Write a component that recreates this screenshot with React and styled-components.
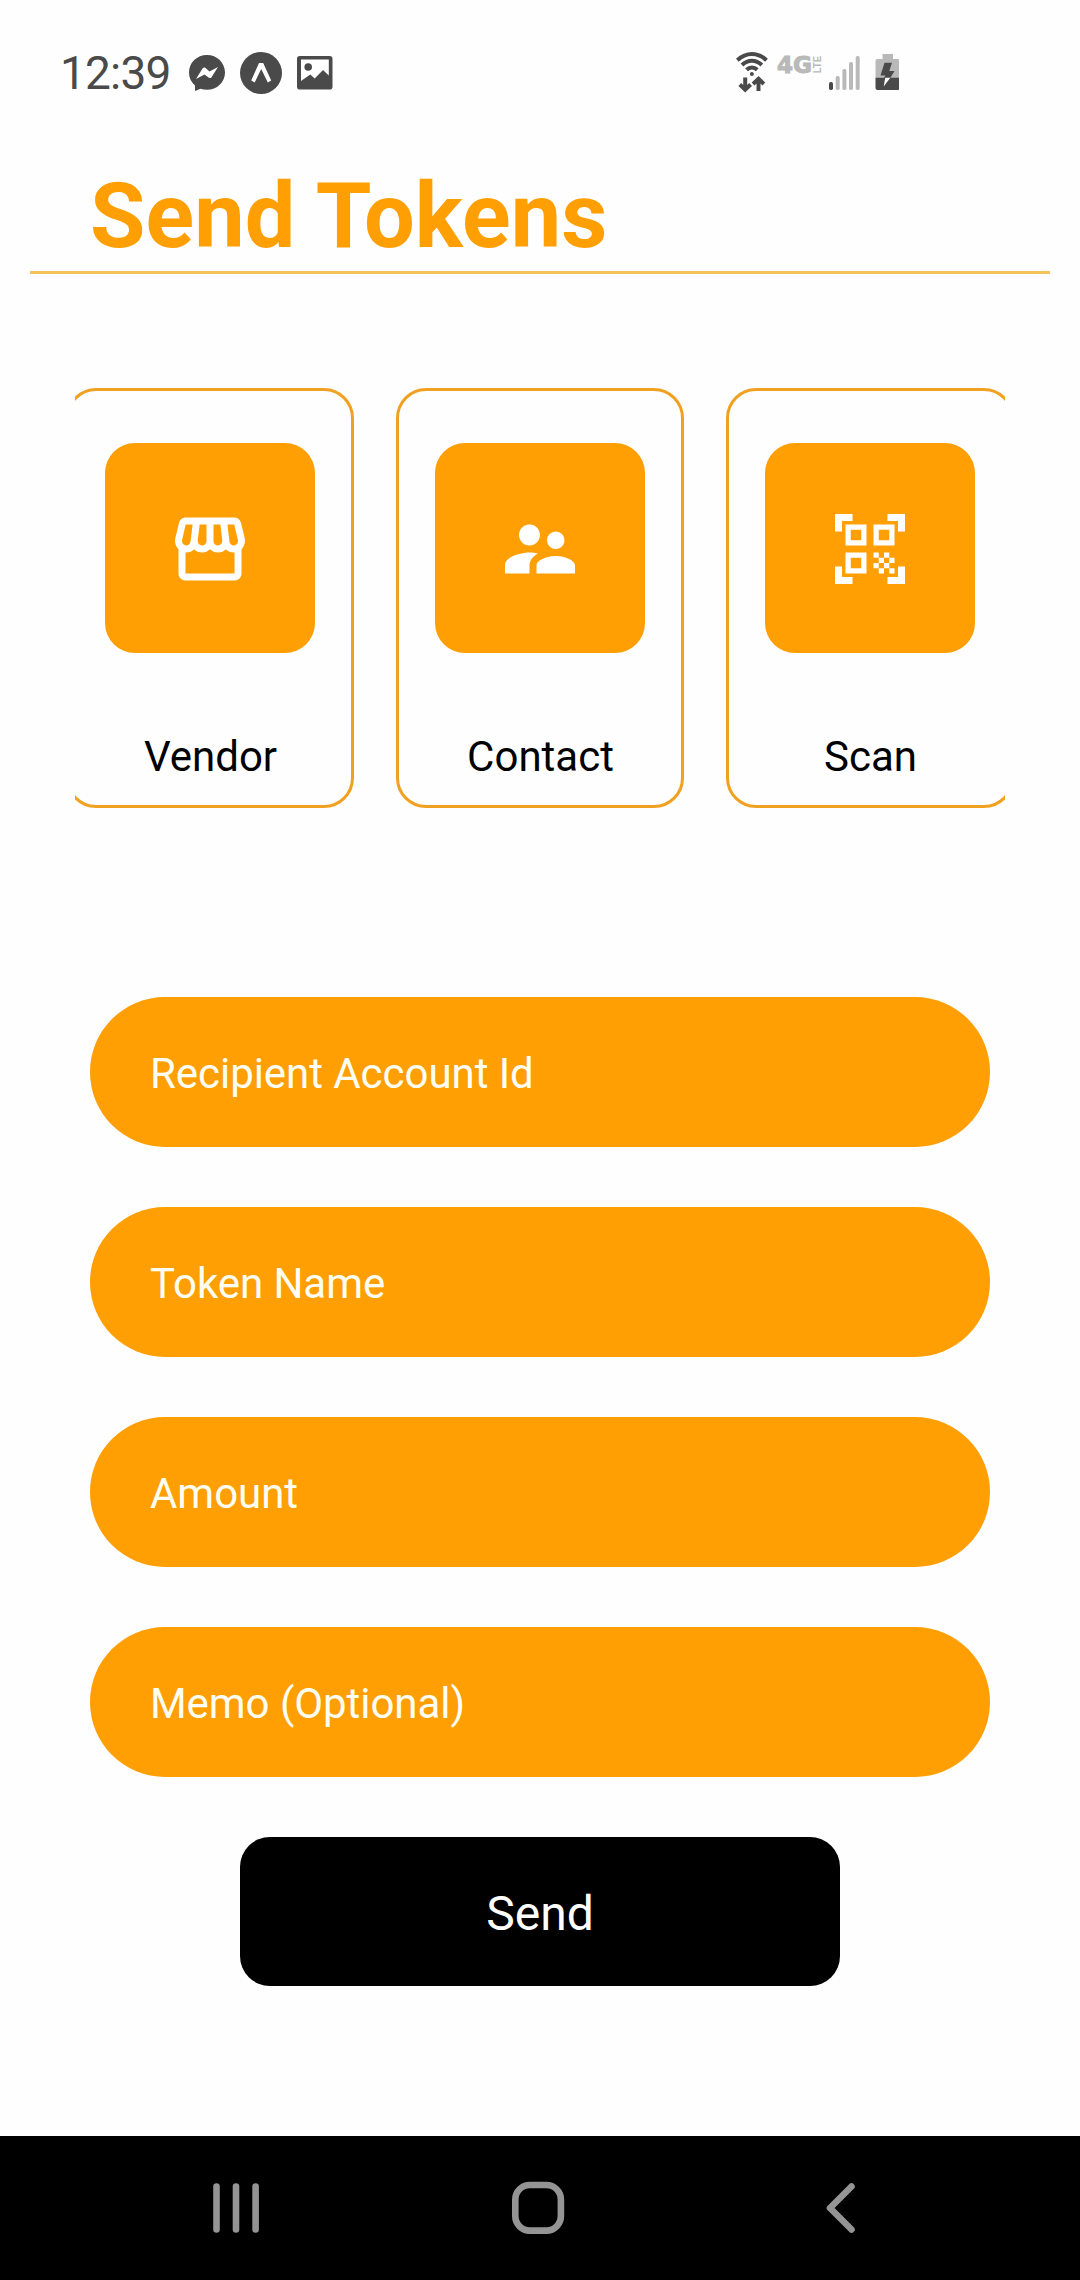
import styled, { createGlobalStyle } from 'styled-components';
import { MdOutlineStorefront, MdSupervisorAccount, MdOutlineQrCodeScanner } from 'react-icons/md';

const orange = '#ff9f04';
const statusDark = '#4a4a4a';
const statusLight = '#b9b9b9';

const GlobalStyle = createGlobalStyle`
    *{
        box-sizing:border-box;
        margin:0;
        padding:0;
    }
    body{
        background:#fefefe;
        font-family:Roboto, "Liberation Sans", sans-serif;
    }
`;

const Screen = styled.div`
    width:1080px;
    height:2280px;
    display:flex;
    flex-direction:column;
    overflow:hidden;
    background:#fefefe;
`;

const StatusBar = styled.header`
    height:146px;
    padding:0 181px 0 60px;
    display:flex;
    align-items:center;
    justify-content:space-between;
`;

const StatusGroup = styled.div`
    display:flex;
    align-items:center;
    gap:${props => props.gap};
`;

const Clock = styled.span`
    width:114px;
    color:${statusDark};
    font-size:46px;
    line-height:54px;
    letter-spacing:-0.8px;
    white-space:nowrap;
`;

const StatusIcon = styled.svg`
    display:block;
    flex:none;
`;

const Header = styled.div`
    margin:0 30px;
    height:128px;
    padding:18px 60px 0;
    border-bottom:3px solid #f5c35c;
`;

const Title = styled.h1`
    color:${orange};
    font-size:90px;
    line-height:106px;
    font-weight:700;
    letter-spacing:0.1px;
    white-space:nowrap;
`;

const CardList = styled.div`
    margin:114px 75px 0;
    display:flex;
    justify-content:center;
    gap:42px;
    overflow:hidden;
`;

const Card = styled.div`
    flex:none;
    width:288px;
    height:420px;
    padding-top:52px;
    display:flex;
    flex-direction:column;
    align-items:center;
    gap:79px;
    border:3px solid #f1a122;
    border-radius:30px;
`;

const Tile = styled.div`
    flex:none;
    width:210px;
    height:210px;
    padding-top:1px;
    display:flex;
    align-items:center;
    justify-content:center;
    border-radius:30px;
    background:${orange};
    color:white;
    font-size:84px;
`;

const CardLabel = styled.p`
    padding-left:1px;
    color:black;
    font-size:42px;
    line-height:49px;
`;

const Form = styled.form`
    margin-top:189px;
    padding:0 90px;
    display:flex;
    flex-direction:column;
    align-items:center;
    gap:60px;
`;

const Field = styled.label`
    width:100%;
    height:150px;
    padding:2px 60px 0;
    display:flex;
    align-items:center;
    border-radius:75px;
    background:${orange};
    color:#fffef2;
    font-size:42px;
    line-height:49px;
    letter-spacing:-0.05px;
`;

const SendButton = styled.button`
    width:600px;
    height:149px;
    padding-top:5px;
    border:none;
    border-radius:30px;
    background:black;
    color:white;
    font-family:inherit;
    font-size:48px;
    line-height:56px;
`;

const NavBar = styled.nav`
    height:144px;
    margin-top:auto;
    padding-left:210px;
    display:flex;
    align-items:center;
    gap:248px;
    background:black;
`;

const NavIcon = styled.svg`
    display:block;
    fill:none;
    stroke:#949494;
    stroke-width:6.6;
    stroke-linecap:round;
    stroke-linejoin:round;
`;

const cards = [
    { label: 'Vendor', Icon: MdOutlineStorefront },
    { label: 'Contact', Icon: MdSupervisorAccount },
    { label: 'Scan', Icon: MdOutlineQrCodeScanner },
];

const fields = ['Recipient Account Id', 'Token Name', 'Amount', 'Memo (Optional)'];

const bars = [
    { x: 0, y: 26 },
    { x: 6.7, y: 20 },
    { x: 13.4, y: 13 },
    { x: 20, y: 6 },
    { x: 26.7, y: 0 },
];

const MessengerIcon = () => (
    <StatusIcon width="36" height="36" viewBox="0 0 36 36">
        <path fill={statusDark} d="M18 0C8 0 0 7.600 0 17.500c0 5.200 2.200 9.700 6 12.900V36l5.500-2.300c2 .7 4.200 1.100 6.500 1.100 10 0 18-7.600 18-17.300S28 0 18 0z" />
        <path fill="white" d="M7 24l6.500-10.500c.8-1 2-1.200 3-.5l4 3.500L29 12l-6.500 10.200c-.8 1-2 1.200-3 .4l-4-3.200z" />
    </StatusIcon>
);

const ExpoIcon = () => (
    <StatusIcon width="42" height="42" viewBox="0 0 42 42">
        <circle cx="21" cy="21" r="21" fill={statusDark} />
        <path fill="white" d="M19 11h4.200l8 17.500-3.400 2-6.600-13.500-6.500 13.500-3.500-2z" />
    </StatusIcon>
);

const PictureIcon = () => (
    <StatusIcon width="36" height="34" viewBox="0 0 36 34">
        <rect width="35.500" height="33.500" rx="2.800" fill={statusDark} />
        <path fill="white" d="M4 3.500h27.800v16L26 14l-8.300 8.500-4.400-4L4 25z" />
        <circle cx="11.200" cy="11" r="3.800" fill={statusDark} />
    </StatusIcon>
);

const WifiIcon = () => (
    <StatusIcon width="32" height="42" viewBox="0 0 32 42" fill="none" stroke={statusDark}>
        <path strokeWidth="4" d="M1.300 8.200Q8 2 15.900 2t14.600 6.200M6 13Q10.500 8.800 15.900 8.800T25.800 13M10.500 17.800q2.500-2.400 5.400-2.400t5.400 2.400" />
        <circle cx="15.900" cy="22" r="2" fill={statusDark} stroke="none" />
        <path strokeWidth="4" d="M9.200 25.500v12M3.800 32.500l5.400 5.200 5.400-5.200M22.500 39V27.500M17.100 32l5.400-5.200 5.400 5.200" />
    </StatusIcon>
);

const NetworkIcon = () => (
    <StatusIcon width="51" height="60" viewBox="-4 -12 51 60" fill={statusLight} fontWeight="700">
        <text x="0" y="17.800" fontFamily="DejaVu Sans" fontSize="23.500" textLength="35" lengthAdjust="spacingAndGlyphs" stroke={statusLight} strokeWidth="1">4G</text>
        <text transform="translate(44.200 18.300) rotate(-90)" fontFamily="Liberation Sans" fontSize="10" textLength="17.500" lengthAdjust="spacingAndGlyphs">LTE</text>
    </StatusIcon>
);

const SignalIcon = () => (
    <StatusIcon width="31" height="34" viewBox="0 0 31 34">
        {bars.map((bar, i) => (
            <rect key={bar.x} x={bar.x} y={bar.y} width="4" height={34 - bar.y} rx="1.700" fill={i === 0 ? statusDark : statusLight} />
        ))}
    </StatusIcon>
);

const BatteryIcon = () => (
    <StatusIcon width="34.500" height="38" viewBox="-10.500 0 34.500 38">
        <path fill={statusLight} d="M7 0h10.500v5H22q2 0 2 2v17H0V7q0-2 2-2h5z" />
        <path fill={statusDark} d="M0 23.700h24V34q0 2-2 2H2q-2 0-2-2z" />
        <path fill={statusDark} d="M9 8.800h7.500L13.800 17H19l-4.200 7H8.500l1.300-2.500H5z" />
        <path fill="white" d="M9.700 23.700h5.100L8.200 32.500z" />
    </StatusIcon>
);

const App = () => {
  return (
    <Screen>
        <GlobalStyle />
        <StatusBar>
            <StatusGroup gap="15px">
                <Clock>12:39</Clock>
                <MessengerIcon />
                <ExpoIcon />
                <PictureIcon />
            </StatusGroup>
            <StatusGroup gap="5px">
                <WifiIcon />
                <NetworkIcon />
                <SignalIcon />
                <BatteryIcon />
            </StatusGroup>
        </StatusBar>
        <Header>
            <Title>Send Tokens</Title>
        </Header>
        <CardList>
            {cards.map(({ label, Icon }) => (
                <Card key={label}>
                    <Tile><Icon /></Tile>
                    <CardLabel>{label}</CardLabel>
                </Card>
            ))}
        </CardList>
        <Form>
            {fields.map(field => <Field key={field}>{field}</Field>)}
            <SendButton type="button">Send</SendButton>
        </Form>
        <NavBar>
            <NavIcon width="52" height="56" viewBox="0 0 52 56">
                <path d="M6.500 6.500v43M26 6.500v43M45.600 6.500v43" />
            </NavIcon>
            <NavIcon width="56" height="56" viewBox="0 0 56 56">
                <rect x="5.300" y="5" width="45.600" height="45.600" rx="14.500" />
            </NavIcon>
            <NavIcon width="42" height="56" viewBox="0 0 42 56">
                <path d="M37.500 6.500L16 28l21.500 21.500" />
            </NavIcon>
        </NavBar>
    </Screen>
  )
}

export default App
